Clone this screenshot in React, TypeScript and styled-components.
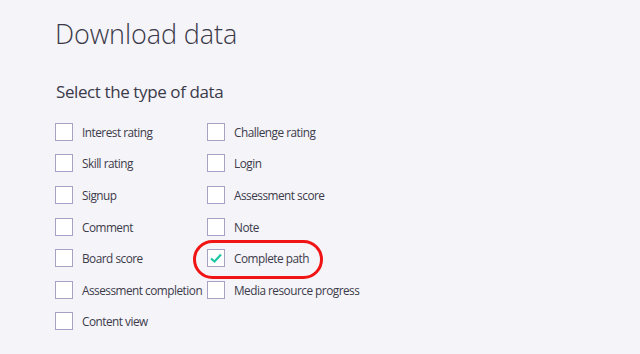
import React, { useState } from "react"
import styled, { createGlobalStyle } from "styled-components"

const GlobalStyle = createGlobalStyle`
  body {
    margin: 0;
    background: #f5f4f9;
    font-family: "Open Sans", "Noto Sans", sans-serif;
    color: #3c3b4a;
  }
`

const leftColumn = [
  "Interest rating",
  "Skill rating",
  "Signup",
  "Comment",
  "Board score",
  "Assessment completion",
  "Content view",
]

const rightColumn = [
  "Challenge rating",
  "Login",
  "Assessment score",
  "Note",
  "Complete path",
  "Media resource progress",
]

export default function App() {
  const [checked, setChecked] = useState<string[]>(["Complete path"])

  const toggle = (name: string) => {
    setChecked((prev) =>
      prev.includes(name) ? prev.filter((n) => n !== name) : [...prev, name]
    )
  }

  const renderItem = (name: string) => {
    const isOn = checked.includes(name)
    return (
      <Option key={name} onClick={() => toggle(name)}>
        <Box>
          {isOn && (
            <svg width='14' height='12' viewBox='0 0 14 12'>
              <path
                d='M2 6.5 L5.5 9.5 L12 2.5'
                fill='none'
                stroke='#1fc7a2'
                strokeWidth='2.2'
              />
            </svg>
          )}
        </Box>
        <Label>{name}</Label>
        {name === "Complete path" && <Highlight />}
      </Option>
    )
  }

  return (
    <Page>
      <GlobalStyle />
      <Title>Download data</Title>
      <Subtitle>Select the type of data</Subtitle>
      <Columns>
        <Column>{leftColumn.map(renderItem)}</Column>
        <Column>{rightColumn.map(renderItem)}</Column>
      </Columns>
    </Page>
  )
}

const Page = styled.div`
  padding: 16px 0 0 55px;
  height: 354px;
  box-sizing: border-box;
`
const Title = styled.h1`
  margin: 0;
  font-size: 27px;
  font-weight: 300;
  line-height: 36px;
  letter-spacing: -0.1px;
  color: #3b3a4a;
`
const Subtitle = styled.h2`
  margin: 29px 0 0 1px;
  font-size: 17px;
  font-weight: 400;
  line-height: 22px;
  letter-spacing: -0.4px;
  color: #3b3a4a;
`
const Columns = styled.div`
  display: grid;
  grid-template-columns: 152px auto;
  margin-top: 13px;
`
const Column = styled.div`
  display: flex;
  flex-direction: column;
`
const Option = styled.div`
  position: relative;
  display: flex;
  align-items: center;
  height: 31.6px;
  cursor: pointer;
  white-space: nowrap;
`
const Box = styled.div`
  width: 18px;
  height: 18px;
  box-sizing: border-box;
  border: 1px solid #a6a2c4;
  background: #ffffff;
  display: flex;
  align-items: center;
  justify-content: center;
  flex-shrink: 0;
`
const Label = styled.span`
  margin-left: 9px;
  font-size: 11.8px;
  letter-spacing: -0.5px;
  color: #3c3b4a;
`
const Highlight = styled.div`
  position: absolute;
  left: -14px;
  top: -2px;
  width: 130px;
  height: 39px;
  box-sizing: border-box;
  border: 3px solid #f01414;
  border-radius: 20px;
  pointer-events: none;
`
